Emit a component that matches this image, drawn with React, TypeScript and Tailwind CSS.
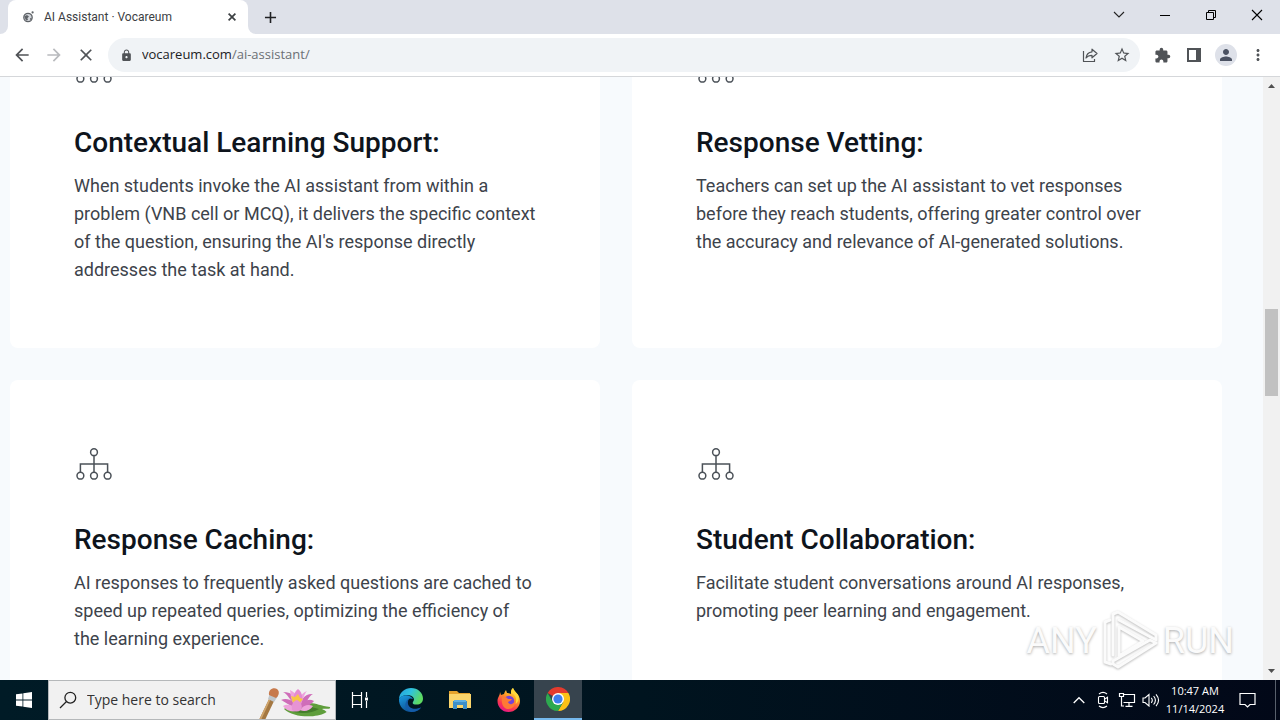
import type { ReactNode } from "react";
import {
  MdArrowBack,
  MdArrowForward,
  MdClose,
  MdExtension,
  MdLock,
  MdMoreVert,
  MdPerson,
  MdStarBorder,
  MdAdd,
} from "react-icons/md";

const FEATURES = [
  {
    title: "Contextual Learning Support:",
    text: "When students invoke the AI assistant from within a problem (VNB cell or MCQ), it delivers the specific context of the question, ensuring the AI's response directly addresses the task at hand.",
  },
  {
    title: "Response Vetting:",
    text: "Teachers can set up the AI assistant to vet responses before they reach students, offering greater control over the accuracy and relevance of AI-generated solutions.",
  },
  {
    title: "Response Caching:",
    text: "AI responses to frequently asked questions are cached to speed up repeated queries, optimizing the efficiency of the learning experience.",
  },
  {
    title: "Student Collaboration:",
    text: "Facilitate student conversations around AI responses, promoting peer learning and engagement.",
  },
];

function IconButton({ label, className, children }: { label: string; className: string; children: ReactNode }) {
  return (
    <button type="button" aria-label={label} className={`flex shrink-0 items-center justify-center ${className}`}>
      {children}
    </button>
  );
}

function TabStrip() {
  return (
    <div className="flex h-[34px] shrink-0 bg-[#dee1e9]">
      <div className="flex w-2 bg-white">
        <div className="flex-1 rounded-br-lg bg-[#dee1e9]" />
      </div>
      <div className="flex w-60 items-center rounded-t-lg bg-white pr-2 pl-3">
        <svg width="16" height="16" viewBox="0 0 16 16" className="mr-2 shrink-0" aria-hidden="true">
          <circle cx="8" cy="8.5" r="4.2" fill="#d4d7dc" stroke="#5f6368" strokeWidth="1.3" />
          <path d="M4.4 7.2 7 6l2 1.6-1.6 1.6L8 11l-2 .6-1-2.4zM10 9l2 .4-1.6 2.2z" fill="#5f6368" />
          <circle cx="12.6" cy="3.4" r="1.1" fill="#5f6368" />
        </svg>
        <span className="min-w-0 flex-1 truncate font-['Roboto',sans-serif] text-xs text-[#3c4043]">
          AI Assistant · Vocareum
        </span>
        <IconButton label="Close tab" className="size-4 text-[#3c4043]">
          <svg width="8" height="8" viewBox="0 0 8 8" fill="none" stroke="currentColor" strokeWidth="1.7">
            <path d="m.6.6 6.800 6.800M7.400.6.6 7.400" />
          </svg>
        </IconButton>
      </div>
      <div className="flex w-2 bg-white">
        <div className="flex-1 rounded-bl-lg bg-[#dee1e9]" />
      </div>
      <IconButton label="New tab" className="w-7 text-[#202124]">
        <MdAdd size={19} />
      </IconButton>
      <div className="flex-1" />
      <div className="flex items-center pb-1 text-black">
        <IconButton label="Search tabs" className="h-7 w-[46px]">
          <svg width="12" height="8" viewBox="0 0 12 8" fill="none" stroke="#222" strokeWidth="1.1">
            <path d="m1 1 5 5 5-5" />
          </svg>
        </IconButton>
        <IconButton label="Minimize" className="h-7 w-[46px]">
          <svg width="10" height="10" viewBox="0 0 10 10">
            <path d="M0 5h10v1H0z" />
          </svg>
        </IconButton>
        <IconButton label="Restore" className="h-7 w-[46px]">
          <svg width="10" height="10" viewBox="0 0 10 10" fill="none" stroke="#000">
            <path d="M.5 2.500h7v7h-7zM2.500 2V.5h7v7H8" />
          </svg>
        </IconButton>
        <IconButton label="Close window" className="h-7 w-[46px]">
          <svg width="12" height="12" viewBox="0 0 12 12" fill="none" stroke="#000" strokeWidth="1.1">
            <path d="m1 1 10 10M11 1 1 11" />
          </svg>
        </IconButton>
      </div>
    </div>
  );
}

function Toolbar() {
  return (
    <div className="flex h-[43px] shrink-0 items-center border-b border-[#d5d7da] bg-white pl-1.5 text-[#505357]">
      <IconButton label="Back" className="size-8">
        <MdArrowBack size={20} />
      </IconButton>
      <IconButton label="Forward" className="size-8 text-[#b9bbbe]">
        <MdArrowForward size={20} />
      </IconButton>
      <IconButton label="Stop loading" className="size-8">
        <MdClose size={20} />
      </IconButton>
      <div className="ml-1.5 flex h-[34px] min-w-0 flex-1 items-center rounded-full bg-[#f0f3f6] pr-1.5 pl-3">
        <MdLock size={13} className="mr-2 shrink-0" />
        <a href="#address" className="ml-px min-w-0 flex-1 truncate text-[13px] text-[#6b6f74]">
          <span className="text-[#202124]">vocareum.com</span>/ai-assistant/
        </a>
        <IconButton label="Share" className="h-8 w-8">
          <svg width="16" height="16" viewBox="0 0 16 16" fill="none" stroke="currentColor" strokeWidth="1.2" strokeLinejoin="round">
            <path d="M1.500 4v10.500h11V12" />
            <path d="M10 2.200 15 6.500l-5 4.300V8.300c-2.600 0-4.500.7-6 2.700.4-3.400 2.400-5.700 6-6.200z" />
          </svg>
        </IconButton>
        <IconButton label="Bookmark this tab" className="ml-1 h-8 w-6">
          <MdStarBorder size={18} />
        </IconButton>
      </div>
      <IconButton label="Extensions" className="ml-1.5 size-8">
        <MdExtension size={17} />
      </IconButton>
      <IconButton label="Side panel" className="size-8">
        <svg width="14" height="14" viewBox="0 0 14 14" fill="currentColor">
          <path fillRule="evenodd" d="M0 0h14v14H0zM2 2v10h7V2z" />
        </svg>
      </IconButton>
      <IconButton label="Profile" className="size-8">
        <span className="flex size-[22px] items-center justify-center rounded-full bg-[#dee1e9] text-[#4b5262]">
          <MdPerson size={18} />
        </span>
      </IconButton>
      <IconButton label="Menu" className="mr-1.5 size-8">
        <MdMoreVert size={18} />
      </IconButton>
    </div>
  );
}

function HierarchyIcon() {
  return (
    <svg width="40" height="40" viewBox="0 0 40 40" fill="none" stroke="#4b5158" strokeWidth="1.500" aria-hidden="true">
      <circle cx="20" cy="8.200" r="3.400" />
      <circle cx="6.400" cy="31.700" r="3.400" />
      <circle cx="20" cy="31.700" r="3.400" />
      <circle cx="33.600" cy="31.700" r="3.400" />
      <path d="M20 11.600v16.700M6.400 28.300V20h27.200v8.300" />
    </svg>
  );
}

function FeatureCard({ title, text }: { title: string; text: string }) {
  return (
    <article className="rounded-lg bg-white p-16">
      <HierarchyIcon />
      <h3 className="mt-[38px] text-[28px] leading-9 font-medium text-[#0e141c]">{title}</h3>
      <p className="mt-[11px] text-lg leading-7 text-[#3d434b]">{text}</p>
    </article>
  );
}

function Scrollbar() {
  return (
    <div className="flex w-[17px] shrink-0 flex-col items-center bg-[#f1f1f1]">
      <svg width="17" height="17" viewBox="0 0 17 17" fill="#505050">
        <path d="m5 11 3.500-4 3.500 4z" />
      </svg>
      <div className="min-h-0 flex-[215]" />
      <div className="h-[87px] w-[13px] bg-[#c1c1c1]" />
      <div className="min-h-0 flex-[267]" />
      <svg width="17" height="17" viewBox="0 0 17 17" fill="#505050">
        <path d="m5 6 3.500 4L12 6z" />
      </svg>
    </div>
  );
}

function Watermark() {
  return (
    <div className="pointer-events-none absolute right-[46px] bottom-2 flex items-center gap-1 font-['Roboto',sans-serif] text-4xl leading-[62px] font-normal text-[#fbfbfb] [text-shadow:0_1px_3px_#aaa]">
      <span>ANY</span>
      <svg
        width="58"
        height="62"
        viewBox="0 0 58 62"
        fill="none"
        className="[filter:drop-shadow(0_1px_1px_#bbb)]"
        stroke="#fbfbfb"
        strokeWidth="3"
        strokeLinejoin="round"
        strokeLinecap="round"
      >
        <path d="M9 10 4 12v40l6 2" />
        <path d="M12 45V4l5-2 38 23v5L18 10" />
        <path d="M18 17v29l24-15z" />
        <path d="m12 51 37-21 6 3-38 24-5-3z" />
      </svg>
      <span>RUN</span>
    </div>
  );
}

function EdgeLogo() {
  return (
    <svg width="26" height="26" viewBox="0 0 26 26">
      <defs>
        <linearGradient id="edge-top" x1="0" y1="0" x2="1" y2="0.400">
          <stop offset="0" stopColor="#249fdc" />
          <stop offset="0.500" stopColor="#2fc2df" />
          <stop offset="1" stopColor="#5ddb62" />
        </linearGradient>
        <linearGradient id="edge-low" x1="0" y1="0" x2="0.600" y2="1">
          <stop offset="0" stopColor="#1b9de2" />
          <stop offset="1" stopColor="#0c4a8c" />
        </linearGradient>
      </defs>
      <path d="M1 12C1.500 5 7 1 13 1c7 0 12 5 12 10.500 0 4-3 6-6 6-3.500 0-5-1-4-2.600 1-1.500 1.300-2.400.6-3.900C14 7.500 5 6 1 12z" fill="url(#edge-top)" />
      <path d="M1 12c3-5 11-5 14 0-3-1.500-6 0-6 4 0 5 6 8 14 4.500C21 24 17 25 13 25 6 25 .5 19 1 12z" fill="url(#edge-low)" />
      <path d="M11.500 11.500C7 13 4.500 22 13 25c4.500 0 8-2 10-4.500-7 3-12 .5-13-3.500-.4-2.200 0-4 1.500-5.500z" fill="#145ca8" />
    </svg>
  );
}

function FolderLogo() {
  return (
    <svg width="24" height="22" viewBox="0 0 24 22">
      <path d="M1 2h8l2 2h11v5H1z" fill="#e5a32c" />
      <path d="M1 5h22v14H1z" fill="#fbd56b" />
      <path d="M5 12h14v8h-4v-4H9v4H5z" fill="#3d8fc8" />
      <path d="M6 11h12v2H6z" fill="#5fb0e2" />
    </svg>
  );
}

function FirefoxLogo() {
  return (
    <svg width="24" height="24" viewBox="0 0 24 24">
      <defs>
        <linearGradient id="fox" x1="0.800" y1="0" x2="0.300" y2="1">
          <stop offset="0" stopColor="#fff44f" />
          <stop offset="0.400" stopColor="#ff9a24" />
          <stop offset="0.750" stopColor="#fb3650" />
          <stop offset="1" stopColor="#e5168a" />
        </linearGradient>
      </defs>
      <path d="M3 4 4 7l3-1c1-3 2-4 2-4l1 3c2 0 3 1 4 1 0-3 0-4 2-6 1 4 7 6 7 13 0 6-5 11-11.500 11S.5 19 .5 13C.5 9 3 8 3 4z" fill="url(#fox)" />
      <circle cx="12" cy="13" r="5.200" fill="#7543d8" />
      <path d="M5 9c3-1 5 .5 6 2h4c-1 2-3 2-4 3 1 3 5 3 7-1 1 4-2 8-6.500 8S4 17 5 9z" fill="#ff7a35" />
      <path d="M14 5c5 2 6 6 4.500 11 3-2 4-6 2.500-9-1-2-4-4-5-7-2 2-2 3-2 5z" fill="#ffd83b" />
    </svg>
  );
}

function ChromeLogo() {
  return (
    <svg width="24" height="24" viewBox="0 0 24 24">
      <path d="M12 12 1.600 6A12 12 0 0 1 22.400 6z" fill="#e33b2e" />
      <path d="M12 6h10.400A12 12 0 0 1 12 24l5.200-9z" fill="#fbc116" />
      <path d="M6.800 15 1.600 6A12 12 0 0 0 12 24l5.200-9z" fill="#2da94f" />
      <circle cx="12" cy="12" r="6" fill="#fff" />
      <circle cx="12" cy="12" r="4.600" fill="#3e7fee" />
    </svg>
  );
}

function SearchArt() {
  return (
    <svg width="80" height="38" viewBox="0 0 80 38" className="shrink-0" aria-hidden="true">
      <path d="M29 28c6-5 17-7 26-6 6 0 11 3 20 4 1 3-5 1-8 2 4 2 6 3 3 4-9 5-32 5-41-4z" fill="#5f9e3c" />
      <path d="M34 29c8 4 22 4 30-1l-12-3z" fill="#447d2b" />
      <path d="M4 39 15 16l5 2L10 39z" fill="#a47842" />
      <path d="M4 39 15 16l1.500.6L6 39z" fill="#cfa56c" />
      <path d="m13 18 2-6 8 3-4 6z" fill="#bfc6cb" />
      <path d="M14 14c-1-5 4-8 8-6 3 2 2 7-1 9z" fill="#c77a4c" />
      <g fill="#cf6db9">
        <path d="M44 28C34 25 29 20 26 19c7-3 15 2 19 9z" />
        <path d="M43 26C35 20 32 12 28 11c9 0 16 6 17 15z" />
        <path d="M45 27c8 0 12-5 14-7-6-3-11 0-14 7z" />
        <path d="M44 27c9-5 10-13 14-14-7-1-13 5-14 14z" />
      </g>
      <g fill="#eea3dc">
        <path d="M42 27c-7-7-6-13-7-18 6 3 11 9 9 18z" />
        <path d="M44 27c4-7 5-14 8-17-7 3-11 10-8 17z" />
        <path d="M44 29c-6-6-13-6-16-4 3 5 10 7 16 4zM45 29c3-5 9-6 13-4-3 5-9 6-13 4z" />
      </g>
      <path d="M40 23c-3-6-1-12 3-15 5 4 5 10 3 15z" fill="#e58bd2" />
      <path d="m36 15 4 1 3-3 2 4 3 1-5 6-5-2z" fill="#f7c744" />
      <path d="M37 29c-1-5 1-9 5-10 4 2 6 6 4 10-3 2-6 2-9 0z" fill="#e793d4" />
    </svg>
  );
}

function Taskbar() {
  return (
    <footer className="flex h-10 shrink-0 items-stretch bg-linear-to-r from-[#001b26] via-[#00141f] via-50% to-[#020818] text-white">
      <IconButton label="Start" className="w-12">
        <svg width="16" height="16" viewBox="0 0 16 16" fill="#fff">
          <path d="m0 2.300 6.500-.9v6.100H0zM7.300 1.300 16 0v7.500H7.300zM0 8.400h6.500v6.200L0 13.700zM7.300 8.400H16V16l-8.700-1.200z" />
        </svg>
      </IconButton>
      <label className="flex w-72 items-center overflow-hidden border border-[#b5b8ba] bg-[#f1f1f1] pl-2.5">
        <svg width="18" height="18" viewBox="0 0 18 18" fill="none" stroke="#222" strokeWidth="1.300" className="mr-2.5 shrink-0">
          <circle cx="11.300" cy="6.700" r="5.400" />
          <path d="m7.500 10.500-6.500 6.500" />
        </svg>
        <input
          type="text"
          aria-label="Type here to search"
          placeholder="Type here to search"
          className="min-w-0 flex-1 bg-transparent text-sm text-[#333] outline-none placeholder:text-[#333] placeholder:opacity-100"
        />
        <SearchArt />
      </label>
      <IconButton label="Task view" className="w-12">
        <svg width="18" height="18" viewBox="0 0 18 18" fill="none" stroke="#fff" strokeWidth="1.200">
          <path d="M1.500 1v3.500h9V1M1.500 17v-3.500h9V17M1.500 4.500v9M10.500 4.500v9M15.500 1v5M15.500 10v7" />
          <path d="M14 6.500h3v3h-3z" fill="#fff" stroke="none" />
        </svg>
      </IconButton>
      <IconButton label="Microsoft Edge" className="ml-0.5 w-[49px]">
        <EdgeLogo />
      </IconButton>
      <IconButton label="File Explorer" className="w-[49px]">
        <FolderLogo />
      </IconButton>
      <IconButton label="Firefox" className="w-[50px]">
        <FirefoxLogo />
      </IconButton>
      <IconButton label="Google Chrome" className="w-12 border-b-2 border-[#76b9ed] bg-[#37444e]">
        <ChromeLogo />
      </IconButton>
      <div className="flex-1" />
      <IconButton label="Show hidden icons" className="w-6">
        <svg width="12" height="8" viewBox="0 0 12 8" fill="none" stroke="#fff" strokeWidth="1.300">
          <path d="m.7 7 5.300-5.300L11.300 7" />
        </svg>
      </IconButton>
      <IconButton label="Meet now" className="w-6">
        <svg width="16" height="18" viewBox="0 0 16 18" fill="none" stroke="#fff" strokeWidth="1.100">
          <rect x="3.500" y="5.500" width="6" height="7" rx="1" />
          <path d="m9.500 8.300 3-2v5.400l-3-2M4 3c2.500-2 5.500-2 8 0M4 15c2.500 2 5.500 2 8 0" />
        </svg>
      </IconButton>
      <IconButton label="Network" className="w-6">
        <svg width="18" height="16" viewBox="0 0 18 16" fill="none" stroke="#fff" strokeWidth="1.200">
          <path d="M6 2.500h10.500v8H5.500M11 10.500V14M7.500 14.400h7M1.500 1.500h4v3h-4zM3.500 4.500V14H6" />
        </svg>
      </IconButton>
      <IconButton label="Volume" className="w-6">
        <svg width="18" height="14" viewBox="0 0 18 14" fill="none" stroke="#fff" strokeWidth="1.100">
          <path d="M1 5v4.500h2L7 13V1.500L3 5zM9.300 4.800c1.200 1.500 1.200 3.500 0 5M11.600 3c2.300 2.700 2.300 5.800 0 8.500M14 1.300c3.200 3.700 3.200 8.100 0 11.800" />
        </svg>
      </IconButton>
      <div className="flex w-16 flex-col justify-center text-center text-[11px] leading-[18px]">
        <span>10:47 AM</span>
        <span>11/14/2024</span>
      </div>
      <IconButton label="Notifications" className="w-10">
        <svg width="17" height="17" viewBox="0 0 17 17" fill="none" stroke="#fff" strokeWidth="1.200">
          <path d="M1 1.500h15v11h-5L8.500 15 6 12.500H1z" />
        </svg>
      </IconButton>
      <div className="ml-2 w-[5px] border-l border-[#58606c]" />
    </footer>
  );
}

export default function App() {
  return (
    <div className="flex h-screen flex-col overflow-hidden bg-white font-['Open_Sans','Noto_Sans',sans-serif]">
      <TabStrip />
      <Toolbar />
      <div className="relative flex min-h-0 flex-1">
        <main className="min-w-0 flex-1 overflow-hidden bg-[#f7fafd] pr-[41px] pl-2.5 font-['Roboto',sans-serif]">
          <div className="-mt-[94px] grid grid-cols-2 gap-8">
            {FEATURES.map((feature) => (
              <FeatureCard key={feature.title} title={feature.title} text={feature.text} />
            ))}
          </div>
        </main>
        <Scrollbar />
        <Watermark />
      </div>
      <Taskbar />
    </div>
  );
}
